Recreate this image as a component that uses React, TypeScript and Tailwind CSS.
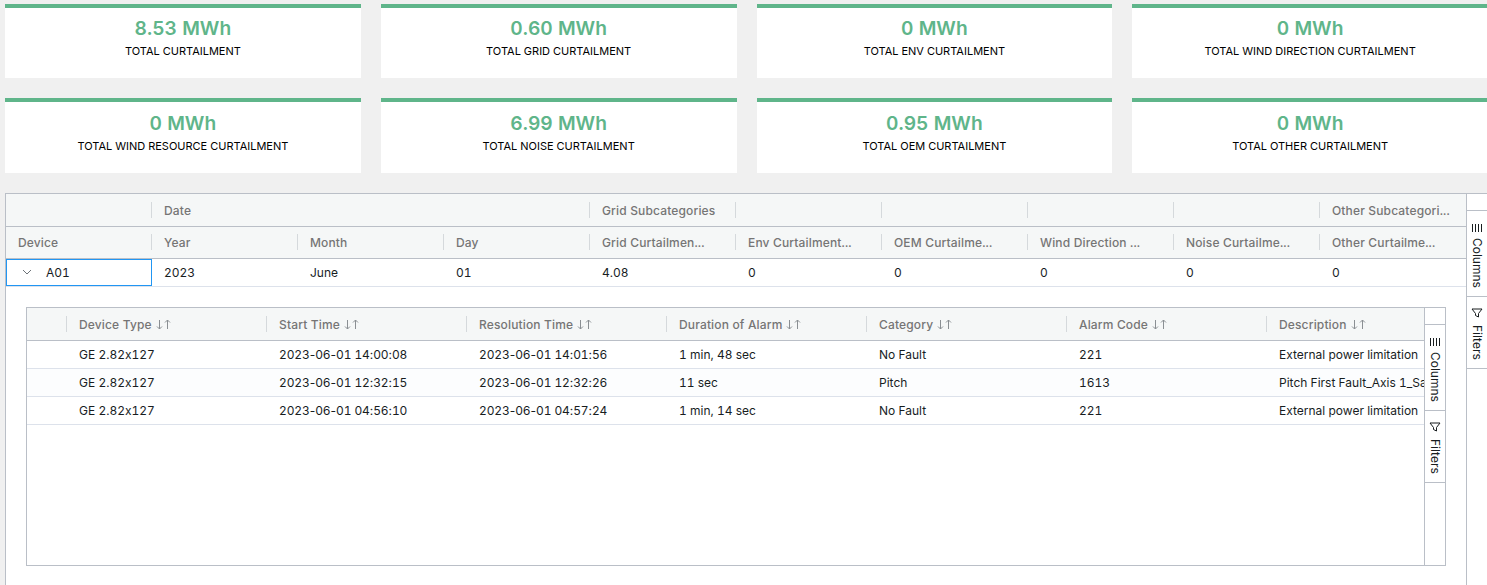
const top = ["Device", "Year", "Month", "Day", "Grid Curtailmen...", "Env Curtailment...", "OEM Curtailme...", "Wind Direction ...", "Noise Curtailme...", "Other Curtailme..."];
const group = ["", "Date", "", "", "Grid Subcategories", "", "", "", "", "Other Subcategori..."];
const vals = ["2023", "June", "01", "4.08", "0", "0", "0", "0", "0"];
const cards = [
  ["8.53 MWh", "TOTAL CURTAILMENT"], ["0.60 MWh", "TOTAL GRID CURTAILMENT"], ["0 MWh", "TOTAL ENV CURTAILMENT"], ["0 MWh", "TOTAL WIND DIRECTION CURTAILMENT"],
  ["0 MWh", "TOTAL WIND RESOURCE CURTAILMENT"], ["6.99 MWh", "TOTAL NOISE CURTAILMENT"], ["0.95 MWh", "TOTAL OEM CURTAILMENT"], ["0 MWh", "TOTAL OTHER CURTAILMENT"],
];
const heads = ["Device Type", "Start Time", "Resolution Time", "Duration of Alarm", "Category", "Alarm Code", "Description"];
const rows = [
  ["GE 2.82x127", "2023-06-01 14:00:08", "2023-06-01 14:01:56", "1 min, 48 sec", "No Fault", "221", "External power limitation"],
  ["GE 2.82x127", "2023-06-01 12:32:15", "2023-06-01 12:32:26", "11 sec", "Pitch", "1613", "Pitch First Fault_Axis 1_Safety"],
  ["GE 2.82x127", "2023-06-01 04:56:10", "2023-06-01 04:57:24", "1 min, 14 sec", "No Fault", "221", "External power limitation"],
];

function Sep() {
  return <span className="absolute left-[-1px] top-1/2 h-4 w-px -translate-y-1/2 bg-[#d5d9dc]" />;
}
function SortIcon() {
  return (
    <svg width="15" height="11" viewBox="0 0 15 11" fill="none" stroke="#8a8f93" strokeWidth="1" className="ml-1 shrink-0">
      <path d="M3.5 1v9M1 7.5l2.5 2.5L6 7.5M11.5 10V1M9 3.5L11.5 1 14 3.5" />
    </svg>
  );
}
function ColumnsIcon() {
  return (
    <svg width="12" height="10" viewBox="0 0 12 10" fill="none" stroke="#181d1f" strokeWidth="1">
      <path d="M1.5 1v8M4.5 1v8M7.5 1v8M10.5 1v8" />
    </svg>
  );
}
function FilterIcon() {
  return (
    <svg width="12" height="12" viewBox="0 0 12 12" fill="none" stroke="#181d1f" strokeWidth="1" strokeLinejoin="round">
      <path d="M1 2h10L7.5 6.5V10L4.5 8.5V6.5z" />
    </svg>
  );
}
function SideBar() {
  return (
    <div className="w-[21px] shrink-0 border-l border-[#babfc7] bg-white pt-[16px]">
      <div className="flex h-[87px] flex-col items-center gap-[5px] border-y border-[#babfc7] pt-3">
        <ColumnsIcon />
        <span className="text-[12px] leading-[14px] text-[#181d1f] [writing-mode:vertical-rl]">Columns</span>
      </div>
      <div className="flex h-[72px] flex-col items-center gap-1.5 border-b border-[#babfc7] pt-2.5">
        <FilterIcon />
        <span className="text-[12px] leading-[14px] text-[#181d1f] [writing-mode:vertical-rl]">Filters</span>
      </div>
    </div>
  );
}
function TimeText({ text }: { text: string }) {
  return (
    <span className="tracking-[-0.1px]">
      {text.split(/([-:])/).map((part, i) =>
        part === "-" || part === ":" ? (
          <span key={i} className="normal-nums">{part}</span>
        ) : (
          <span key={i}>{part}</span>
        )
      )}
    </span>
  );
}

export default function App() {
  return (
    <div className="h-[585px] w-[1487px] overflow-hidden bg-[#f0f0f0] pl-[5px] pt-1 tabular-nums [font-family:Inter,sans-serif] [font-variant-ligatures:none] [font-feature-settings:'calt'_0,'liga'_0]">
      <div className="grid w-[1483px] grid-cols-4 gap-x-5 gap-y-5">
        {cards.map(([v, l]) => (
          <div key={l} className="h-[74.49px] border-t-4 border-[#5fb58a] bg-white text-center">
            <div className="mt-[6.3px] text-[19.2px] font-semibold leading-[28px] text-[#5fb58a]">{v}</div>
            <div className="mt-[2px] text-[11px] leading-[14px] text-black">{l}</div>
          </div>
        ))}
      </div>

      <div className="mt-5 flex h-[400px] w-[1482px] border border-[#babfc7] bg-white">
        <div className="w-[1460px] shrink-0">
          <div className="grid h-[33px] grid-cols-[repeat(10,146px)] border-b border-[#babfc7] bg-[#f5f7f7] text-[12px] font-medium tracking-[0.15px] text-[#757575]">
            {group.map((g, i) => (
              <div key={i} className="relative flex items-center whitespace-nowrap pl-3 pt-[2px]">
                {i === 1 || i >= 4 ? <Sep /> : null}
                {g}
              </div>
            ))}
          </div>
          <div className="grid h-[32px] grid-cols-[repeat(10,146px)] border-b border-[#babfc7] bg-[#f5f7f7] text-[12px] font-medium tracking-[0.15px] text-[#757575]">
            {top.map((t, i) => (
              <div key={t} className="relative flex items-center whitespace-nowrap pl-3 pt-[2px]">
                {i > 0 ? <Sep /> : null}
                {t}
              </div>
            ))}
          </div>
          <div className="grid h-[28px] grid-cols-[repeat(10,146px)] border-b border-[#dde2eb] text-[12px] text-[#181d1f]">
            <div className="flex items-center border border-[#2196f3] pl-[15px]">
              <svg width="10" height="6" viewBox="0 0 10 6" fill="none" stroke="#6d7378" strokeWidth="1">
                <path d="M1 1l4 4 4-4" />
              </svg>
              <span className="ml-[14px] pt-[2px]">A01</span>
            </div>
            {vals.map((v, i) => (
              <div key={i} className="flex items-center pl-3 pt-[2px]">{v}</div>
            ))}
          </div>

          <div className="ml-5 mt-5 flex h-[259px] w-[1420px] border border-[#babfc7]">
            <div className="w-[1397px] shrink-0 overflow-hidden">
              <div className="flex h-[33px] border-b border-[#babfc7] bg-[#f5f7f7] text-[12px] font-medium tracking-[0.15px] text-[#757575]">
                <div className="w-[40px] shrink-0" />
                {heads.map((h) => (
                  <div key={h} className={`relative flex shrink-0 items-center pl-3 pt-[2px] ${h === "Description" ? "w-[157px]" : "w-[200px]"}`}>
                    <Sep />
                    {h}
                    <SortIcon />
                  </div>
                ))}
              </div>
              {rows.map((r, idx) => (
                <div key={idx} className={`flex h-[28px] border-b border-[#dde2eb] text-[12px] text-[#181d1f] ${idx === 1 ? "bg-[#fcfdfe]" : "bg-white"}`}>
                  <div className="w-[40px] shrink-0" />
                  {r.map((c, i) => (
                    <div key={i} className={`flex shrink-0 items-center overflow-hidden whitespace-nowrap pl-3 pt-[2px] ${i === 6 ? "w-[157px]" : "w-[200px]"}`}>
                      {i === 1 || i === 2 ? <TimeText text={c} /> : c}
                    </div>
                  ))}
                </div>
              ))}
            </div>
            <SideBar />
          </div>
        </div>
        <SideBar />
      </div>
    </div>
  );
}
